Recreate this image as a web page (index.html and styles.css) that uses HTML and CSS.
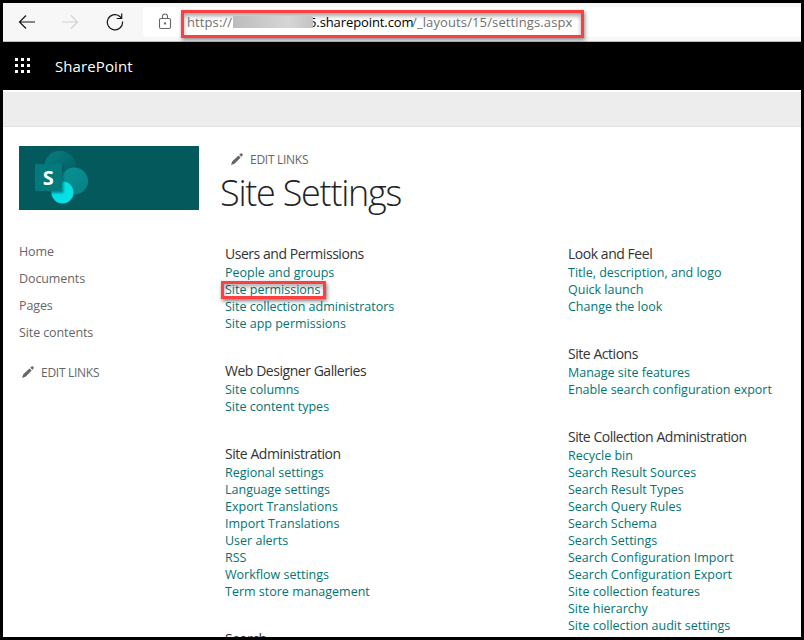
FILE: index.html
```html
<!DOCTYPE html>
<html lang="en">
<head>
<meta charset="utf-8">
<title>Site Settings</title>
<link rel="stylesheet" href="styles.css">
</head>
<body>
<div class="window">
  <header class="browser">
    <svg class="nav" viewBox="0 0 18 16"><path d="M17 8H1.500M8 1.500L1.500 8L8 14.500"/></svg>
    <svg class="nav forward" viewBox="0 0 18 16"><path d="M0 8H15.500M9 1.500L15.500 8L9 14.500"/></svg>
    <svg class="reload" viewBox="0 0 18 18"><path d="M16.500 8.500A7.600 7.600 0 1 1 13.500 3.200L15.500 5M15.700 .5V5.500H10.700"/></svg>
    <div class="address">
      <svg class="lock" viewBox="0 0 14 17"><rect x="1.500" y="5.500" width="11" height="10" rx="1.500"/><path d="M4.500 5V3.500a2.500 2.500 0 0 1 5 0V5"/><circle cx="7" cy="10.500" r=".6"/></svg>
      <div class="url"><span class="scheme">https://</span><span class="redacted"></span><span class="host">5.sharepoint.com</span><span class="path">/_layouts/15/settings.aspx</span></div>
    </div>
  </header>
  <div class="suite">
    <div class="waffle"><i></i><i></i><i></i><i></i><i></i><i></i><i></i><i></i><i></i></div>
    <span class="brand">SharePoint</span>
  </div>
  <div class="ribbon"></div>
  <div class="page">
    <aside>
      <svg class="logo" viewBox="0 0 180 64">
        <defs>
          <linearGradient id="back" x1="0" y1="0" x2="1" y2="1"><stop offset="0" stop-color="#078085"/><stop offset="1" stop-color="#03595b"/></linearGradient>
          <linearGradient id="side" x1="0" y1="0" x2="1" y2="1"><stop offset="0" stop-color="#079396"/><stop offset="1" stop-color="#078085"/></linearGradient>
          <filter id="soft" x="-30%" y="-30%" width="160%" height="160%"><feGaussianBlur stdDeviation="1.200"/></filter>
          <clipPath id="discs"><circle cx="41" cy="20.500" r="15.700"/><circle cx="55.500" cy="35" r="13.500"/><circle cx="43.500" cy="46.500" r="11"/></clipPath>
        </defs>
        <rect width="180" height="64" fill="#03595b"/>
        <circle cx="41" cy="20.500" r="15.700" fill="url(#back)"/>
        <circle cx="55.500" cy="35" r="13.500" fill="url(#side)"/>
        <circle cx="43.500" cy="46.500" r="11" fill="#05dfe6"/>
        <g clip-path="url(#discs)"><rect x="17" y="19" width="27.500" height="28" fill="#034f51" opacity=".6" filter="url(#soft)"/></g>
        <rect x="16" y="18" width="27" height="27" rx="1" fill="#04797c"/>
        <text x="29.200" y="39" text-anchor="middle" class="logo-letter">S</text>
      </svg>
      <nav class="quick"><a>Home</a><a>Documents</a><a>Pages</a><a>Site contents</a></nav>
      <div class="edit"><svg class="pencil" viewBox="0 0 12 12"><path d="M0 12L1.300 8.300L7.500 2.400L9.700 4.600L3.500 10.700ZM8.300 1.700L9.500 .6Q10.500 0 11.400 .8Q12 1.700 11.400 2.700L10.400 3.800Z"/></svg><span>EDIT LINKS</span></div>
    </aside>
    <main>
      <div class="edit top"><svg class="pencil" viewBox="0 0 12 12"><path d="M0 12L1.300 8.300L7.500 2.400L9.700 4.600L3.500 10.700ZM8.300 1.700L9.500 .6Q10.500 0 11.400 .8Q12 1.700 11.400 2.700L10.400 3.800Z"/></svg><span>EDIT LINKS</span></div>
      <h1>Site Settings</h1>
      <div class="columns">
        <div class="column">
          <section><h2>Users and Permissions</h2><a>People and groups</a><a><span class="marked">Site permissions</span></a><a>Site collection administrators</a><a>Site app permissions</a></section>
          <section><h2>Web Designer Galleries</h2><a>Site columns</a><a>Site content types</a></section>
          <section><h2>Site Administration</h2><a>Regional settings</a><a>Language settings</a><a>Export Translations</a><a>Import Translations</a><a>User alerts</a><a>RSS</a><a>Workflow settings</a><a>Term store management</a></section>
          <section><h2>Search</h2></section>
        </div>
        <div class="column">
          <section><h2>Look and Feel</h2><a>Title, description, and logo</a><a>Quick launch</a><a>Change the look</a></section>
          <section><h2>Site Actions</h2><a>Manage site features</a><a>Enable search configuration export</a></section>
          <section><h2>Site Collection Administration</h2><a>Recycle bin</a><a>Search Result Sources</a><a>Search Result Types</a><a>Search Query Rules</a><a>Search Schema</a><a>Search Settings</a><a>Search Configuration Import</a><a>Search Configuration Export</a><a>Site collection features</a><a>Site hierarchy</a><a>Site collection audit settings</a></section>
        </div>
      </div>
    </main>
  </div>
</div>
</body>
</html>
```

FILE: styles.css
```css
* { box-sizing: border-box; }
body { margin: 0; background: #fff; font-family: "Open Sans", "Noto Sans", sans-serif; }
.window { width: 804px; height: 640px; border: 3px solid #000; overflow: hidden; display: flex; flex-direction: column; }
svg { display: block; flex: none; }

.browser { flex: none; height: 39px; background: #f7f7f7; border-bottom: 1px solid #bdbdbd; display: flex; align-items: flex-start; padding: 4px 0 0 15px; }
.nav, .reload { fill: none; stroke: #161616; stroke-width: 1.2; }
.nav { width: 18px; height: 16px; margin-top: 7px; }
.forward { stroke: #d2d2d2; margin-left: 26px; }
.reload { width: 18px; height: 18px; margin: 6px 0 0 26px; }
.address { flex: 1; height: 30px; margin-left: 19px; padding-left: 15px; background: #fff; border-radius: 4px 0 0 4px; display: flex; }
.lock { width: 14px; height: 17px; margin-top: 6px; fill: none; stroke: #666; stroke-width: 1.1; }
.url { position: relative; display: flex; align-items: center; width: 403px; height: 28px; margin: 3px 0 0 9px; padding: 0 0 4px 3px; border: 3px solid #f94144; box-shadow: 1px 2px 4px rgba(0,0,0,.45), inset 0 3px 4px rgba(0,0,0,.35); font-size: 13px; line-height: 18px; white-space: nowrap; color: #707070; }
.scheme { width: 46px; letter-spacing: .1px; }
.redacted { position: relative; z-index: 1; flex: none; width: 80px; height: 12px; background: linear-gradient(90deg, #bcbcbc, #c9c9c9 35%, #d6d6d6 70%, #c3c3c3); }
.host { flex: none; color: #000; width: 103px; margin-left: -4px; letter-spacing: -.1px; }
.path { letter-spacing: .12px; }

.suite { flex: none; height: 48px; background: #000; display: flex; align-items: center; padding-left: 12px; }
.waffle { display: grid; grid-template-columns: repeat(3, 4px); gap: 2px; }
.waffle i { width: 3px; height: 3px; margin-bottom: 1px; background: #fff; }
.brand { margin-left: 24px; color: #fff; font-size: 15px; font-weight: 500; letter-spacing: .1px; }
.ribbon { flex: none; height: 35px; margin-top: 2px; background: #ededed; border-bottom: 1px solid #e1e1e1; }

.page { display: flex; flex: 1; min-height: 0; }
aside { width: 218px; padding: 19px 0 0 16px; flex: none; }
.logo { width: 180px; height: 64px; }
.logo-letter { font: 700 20px "Open Sans", sans-serif; fill: #fff; }
.quick { display: flex; flex-direction: column; margin-top: 28px; font-size: 12.5px; line-height: 27px; letter-spacing: -.1px; color: #666; }
.edit { display: flex; align-items: center; font-size: 12px; line-height: 18px; color: #666; letter-spacing: -.28px; margin: 18px 0 0 3px; }
.pencil { width: 12px; height: 12px; margin: -2px 7px 0 0; fill: #666; }
main { flex: 1; }
.edit.top { margin: 24px 0 0 10px; }
h1 { margin: 0 0 0 -1px; font-size: 36px; line-height: 48px; font-weight: 300; color: #222; letter-spacing: -1.25px; }
.columns { display: flex; padding: 26px 0 0 4px; }
.column { width: 343px; flex: none; display: flex; flex-direction: column; gap: 28px; }
section { display: flex; flex-direction: column; font-size: 12.5px; line-height: 17px; color: #007575; white-space: nowrap; }
h2 { margin: 0; font-size: 14px; line-height: 21px; font-weight: 400; color: #333; letter-spacing: -.46px; }
section a { align-self: flex-start; }
.marked { position: relative; }
.marked::after { content: ""; box-sizing: border-box; position: absolute; left: -4px; top: 0; width: 105px; height: 18px; border: 3px solid #f94144; box-shadow: 1px 2px 4px rgba(0,0,0,.5), inset 1px 3px 4px rgba(0,0,0,.3); }
```
